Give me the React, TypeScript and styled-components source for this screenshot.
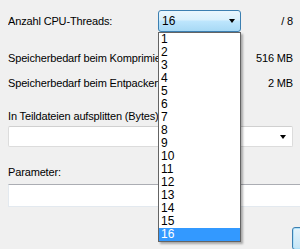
import styled, { createGlobalStyle } from 'styled-components'

const GlobalStyle = createGlobalStyle`
    html, body {
        margin: 0;
        padding: 0;
        background: #f0f0f0;
    }
    body {
        font-family: "Liberation Sans", Arial, sans-serif;
        font-size: 11px;
        letter-spacing: -0.15px;
        color: #000;
    }
`;

const Window = styled.div`
    position: relative;
    width: 300px;
    height: 249px;
    overflow: hidden;
    padding-left: 8px;
    box-sizing: border-box;
    background: #f0f0f0;
`;

const ThreadsRow = styled.div`
    display: flex;
    align-items: center;
    height: 22px;
    margin-top: 10px;
`;

// labels stop where the open list starts, so the list hides their tail
const Label = styled.div<{ $width?: number }>`
    width: ${p => (p.$width ? `${p.$width}px` : 'auto')};
    height: 14px;
    line-height: 14px;
    white-space: nowrap;
    overflow: hidden;
    flex-shrink: 0;
`;

const Value = styled.div`
    flex: 1;
    text-align: right;
    padding-right: 7px;
    white-space: nowrap;
`;

const InfoRow = styled.div<{ $gap: number }>`
    display: flex;
    align-items: center;
    height: 14px;
    margin-top: ${p => p.$gap}px;
`;

const Arrow = styled.span`
    width: 0;
    height: 0;
    border-left: 3.5px solid transparent;
    border-right: 3.5px solid transparent;
    border-top: 4px solid #000;
`;

const ActiveCombo = styled.div`
    display: flex;
    align-items: center;
    justify-content: space-between;
    width: 83px;
    height: 22px;
    box-sizing: border-box;
    padding: 0 5px 0 3px;
    border: 1px solid #3c7fb1;
    border-radius: 3px;
    background: linear-gradient(#eaf6fd 0%, #d9f0fc 45%, #bee6fd 50%, #a7d9f5 100%);
    font-size: 12px;
    letter-spacing: 0;
`;

const Combo = styled.div`
    display: flex;
    align-items: center;
    justify-content: flex-end;
    width: 285px;
    height: 21px;
    margin-top: 3px;
    box-sizing: border-box;
    padding-right: 6px;
    border: 1px solid #dcdcdc;
    border-top-color: #d0d0d0;
    border-radius: 2px;
    background: #fff;
`;

const TextInput = styled.div`
    width: 300px;
    height: 23px;
    margin-top: 5px;
    box-sizing: border-box;
    border: 1px solid #e3e9ef;
    border-top-color: #abadb3;
    background: #fff;
`;

const ButtonRow = styled.div`
    display: flex;
    margin-top: 20px;
    padding-left: 284px;
`;

const Button = styled.div`
    flex-shrink: 0;
    width: 75px;
    height: 23px;
    box-sizing: border-box;
    border: 1px solid #3c7fb1;
    border-radius: 3px;
    background: linear-gradient(#e5f4fc, #c4e5f6);
    box-shadow: inset 0 0 0 1px #aee1f9;
`;

const DropList = styled.ul`
    position: absolute;
    left: 158px;
    top: 32px;
    width: 83px;
    margin: 0;
    padding: 0;
    list-style: none;
    box-sizing: border-box;
    border: 1px solid #646464;
    background: #fff;
    box-shadow: 2px 2px 2px rgba(0, 0, 0, 0.3);
`;

const DropItem = styled.li<{ $selected?: boolean }>`
    height: 13px;
    line-height: 13px;
    padding-left: 2px;
    font-size: 12px;
    letter-spacing: 0;
    background: ${p => (p.$selected ? '#3399ff' : 'transparent')};
    color: ${p => (p.$selected ? '#fff' : '#000')};
`;

const threads = Array.from({ length: 16 }, (_, i) => i + 1)

const App = () => {
    const selected = 16

    return (
        <Window>
            <GlobalStyle />
            <ThreadsRow>
                <Label $width={150}>Anzahl CPU-Threads:</Label>
                <ActiveCombo>
                    <span>{selected}</span>
                    <Arrow />
                </ActiveCombo>
                <Value>/ 8</Value>
            </ThreadsRow>
            <InfoRow $gap={19}>
                <Label $width={150}>Speicherbedarf beim Komprimieren:</Label>
                <Value>516 MB</Value>
            </InfoRow>
            <InfoRow $gap={11}>
                <Label $width={150}>Speicherbedarf beim Entpacken:</Label>
                <Value>2 MB</Value>
            </InfoRow>
            <InfoRow $gap={19}>
                <Label $width={150}>In Teildateien aufsplitten (Bytes):</Label>
            </InfoRow>
            <Combo>
                <Arrow />
            </Combo>
            <InfoRow $gap={18}>
                <Label>Parameter:</Label>
            </InfoRow>
            <TextInput />
            <ButtonRow>
                <Button />
            </ButtonRow>
            <DropList>
                {threads.map(n => (
                    <DropItem key={n} $selected={n === selected}>
                        {n}
                    </DropItem>
                ))}
            </DropList>
        </Window>
    )
}

export default App
